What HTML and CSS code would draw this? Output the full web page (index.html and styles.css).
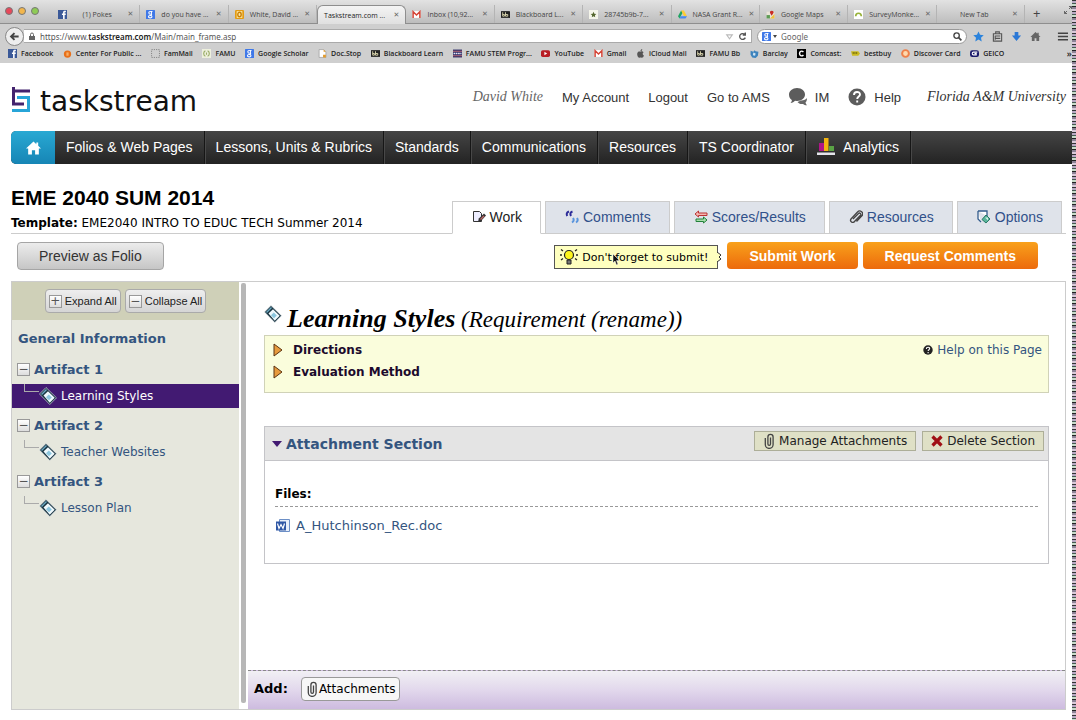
FILE: index.html
```html
<!DOCTYPE html>
<html lang="en">
<head>
<meta charset="utf-8">
<title>Taskstream.com</title>
<link rel="stylesheet" href="styles.css">
</head>
<body>
<svg class="defs" aria-hidden="true">
  <symbol id="i-fb" viewBox="0 0 16 16"><path fill="#3b5998" d="M0 0h16v16H0z"/><path fill="#fff" d="M9 16V9H7V6h2V4.500C9 2.500 10 1.500 12 1.500h2V4h-1.500c-.5 0-.7.300-.7.800V6H14l-.4 3h-1.800v7z"/></symbol>
  <symbol id="i-g" viewBox="0 0 16 16"><rect width="16" height="16" rx="1" fill="#3f78e8"/><g fill="none" stroke="#fff" stroke-width="1.800"><circle cx="7.500" cy="5" r="2.500"/><path d="M9 2.500h2.500M9 7c2 1.500 1 2.500-1 2.700"/><ellipse cx="7.500" cy="11.800" rx="3.200" ry="2.200"/></g></symbol>
  <symbol id="i-outlook" viewBox="0 0 16 16"><rect width="16" height="16" rx="2" fill="#e39b12"/><rect x="3" y="2" width="10" height="12" fill="#fbe9a8"/><ellipse cx="8" cy="8" rx="3" ry="4" fill="none" stroke="#c97f06" stroke-width="2.500"/></symbol>
  <symbol id="i-gmail" viewBox="0 0 16 16"><path fill="#fff" d="M1 2h14v12H1z"/><path fill="none" stroke="#d54436" stroke-width="2.600" d="M2 14V3l6 6 6-6v11"/></symbol>
  <symbol id="i-bb" viewBox="0 0 16 16"><path fill="#222" d="M0 2h16v12H0z"/><path fill="none" stroke="#e7e2b8" stroke-width="1.500" d="M3 4v7h3V8H3M8 4v7h4V8H8"/></symbol>
  <symbol id="i-star" viewBox="0 0 16 16"><path fill="#f5f5ea" d="M0 0h16v16H0z"/><path fill="#56682f" d="m8 3 1.500 3.500L13 7l-2.500 2.500L11 13l-3-2-3 2 .5-3.500L3 7l3.500-.5z"/></symbol>
  <symbol id="i-drive" viewBox="0 0 16 16"><path fill="#1fa463" d="M5.500 1 0 11l2.700 4 5.500-10z"/><path fill="#fc3" d="M5.500 1h5L16 11h-5.300z"/><path fill="#4688f1" d="M5 11h11l-2.700 4H2.700z"/></symbol>
  <symbol id="i-map" viewBox="0 0 16 16"><path fill="#e9e4d8" d="M1 3h14v12H1z"/><path fill="#5d9b55" d="M1 9h6v6H1z"/><path fill="#f0c33c" d="M7 15 15 7v8z"/><path fill="#c92c25" d="M10 10 7 5a3.300 3.300 0 1 1 6.500 0z"/></symbol>
  <symbol id="i-sm" viewBox="0 0 16 16"><path fill="#fff" d="M0 0h16v16H0z"/><path fill="none" stroke="#98b33a" stroke-width="3" d="M3 11c0-7 10-7 10 0"/></symbol>
  <symbol id="i-orange" viewBox="0 0 16 16"><circle cx="8" cy="9" r="6.500" fill="#e8701a"/><path fill="#f8b067" d="M6 6h4v6H6z"/></symbol>
  <symbol id="i-dash" viewBox="0 0 16 16"><path fill="none" stroke="#777" stroke-width="1.500" stroke-dasharray="2 2" d="M1 1h14v14H1z"/></symbol>
  <symbol id="i-code" viewBox="0 0 16 16"><path fill="#eef0dd" d="M0 0h16v16H0z"/><path fill="none" stroke="#9aac67" stroke-width="2" d="M6 3C2 5 2 11 6 13M10 3c4 2 4 8 0 10M8 6v4"/></symbol>
  <symbol id="i-doc" viewBox="0 0 16 16"><path fill="#fff" stroke="#888" d="M2 1h8l4 4v10H2z"/><path fill="#e29a2a" d="M10 1v4h4zM9 10h5v5H9z"/></symbol>
  <symbol id="i-stem" viewBox="0 0 16 16"><path fill="#2b2b66" d="M0 1h16v14H0z"/><path stroke="#d97979" stroke-width="1.500" d="M0 4h16M0 12h16"/><path stroke="#e6e6f5" stroke-width="2.500" stroke-dasharray="3 1" d="M1 8h14"/></symbol>
  <symbol id="i-yt" viewBox="0 0 16 16"><rect y="2" width="16" height="12" rx="3" fill="#b81d24"/><path fill="#fff" d="m6 5 5 3-5 3z"/></symbol>
  <symbol id="i-apple" viewBox="0 0 16 16"><path fill="#555" d="M8 5c2-1.500 4-1 5.500.6-2.500 1.600-2 5 .7 6C13 14.500 11.500 16 10 15.500c-1.300-.6-2-.6-3.400 0C4 16.500 1 10.500 2.500 7 3.700 4.300 6 4 8 5zM8 4c0-2.500 1.300-3.700 3-4 .2 2-1 4-3 4z"/></symbol>
  <symbol id="i-barclay" viewBox="0 0 16 16"><path fill="#3c83bd" d="M1 3l5 2 2-3 2 2 5 1-1 7-4 4-6-1-3-5z"/><path fill="#cfe4f2" d="m6 6 4 2-1 4-4-1z"/></symbol>
  <symbol id="i-c" viewBox="0 0 16 16"><path d="M0 0h16v16H0z"/><path fill="none" stroke="#fff" stroke-width="2.500" d="M11.500 5.500C8 2 4.500 4.500 4.500 8s3.500 6 7 2.500"/></symbol>
  <symbol id="i-bestbuy" viewBox="0 0 16 16"><path fill="#caba21" d="M0 4h13l3 4-3 4H2z"/><path stroke="#3e3900" stroke-width="2" stroke-dasharray="2 1" d="M3 7h9"/></symbol>
  <symbol id="i-disc" viewBox="0 0 16 16"><circle cx="8" cy="8" r="6" fill="#ffd9ad" stroke="#ee8049" stroke-width="3.500"/></symbol>
  <symbol id="i-geico" viewBox="0 0 16 16"><rect y="2" width="16" height="12" rx="4" fill="#1c1b6b"/><path fill="none" stroke="#fff" stroke-width="2" d="M13 5.500H6q-2 0-2 2.500t2 2.500h5V8H8"/></symbol>
  <symbol id="i-book" viewBox="0 0 18 18"><path fill="#17323f" stroke="#f4f8fa" stroke-width=".6" d="M.5 7 7 .5l10.500 10.300-6.700 6.700z"/><path fill="#6ba6c0" d="M2 7 7 2l1 1-5 5z"/><path fill="#eef8fc" d="M4.500 8.500 9 4.200l6.700 6.600-4.900 4.900z"/><path fill="#8cc7df" d="m9.800 7.500 3 3-2.800 2.800-3-3z"/></symbol>
  <symbol id="i-clip" viewBox="0 0 12 16"><path fill="none" stroke="#444" stroke-width="1.300" d="M7.500 4.500V11a1.300 1.300 0 0 1-2.600 0V4a2.600 2.600 0 0 1 5.200 0v7.500a3.900 3.900 0 0 1-7.800 0V5"/></symbol>
</svg>

<div class="screen">
<div class="app">
  <header class="chrome">
    <div class="tabstrip">
      <div class="lights"><i class="light red"></i><i class="light amber"></i><i class="light green"></i></div>
      <div class="tabs">
        <div class="tab"><svg class="fav"><use href="#i-fb"/></svg><span class="tab-name centered">(1) Pokes</span><button class="x" aria-label="Close">✕</button></div>
        <div class="tab"><svg class="fav"><use href="#i-g"/></svg><span class="tab-name">do you have ...</span><button class="x" aria-label="Close">✕</button></div>
        <div class="tab"><svg class="fav"><use href="#i-outlook"/></svg><span class="tab-name">White, David ...</span><button class="x" aria-label="Close">✕</button></div>
        <div class="tab active"><span class="tab-name">Taskstream.com ...</span><button class="x" aria-label="Close">✕</button></div>
        <div class="tab"><svg class="fav"><use href="#i-gmail"/></svg><span class="tab-name">Inbox (10,92...</span><button class="x" aria-label="Close">✕</button></div>
        <div class="tab"><svg class="fav"><use href="#i-bb"/></svg><span class="tab-name">Blackboard L...</span><button class="x" aria-label="Close">✕</button></div>
        <div class="tab"><svg class="fav"><use href="#i-star"/></svg><span class="tab-name">28745b9b-7...</span><button class="x" aria-label="Close">✕</button></div>
        <div class="tab"><svg class="fav"><use href="#i-drive"/></svg><span class="tab-name">NASA Grant R...</span><button class="x" aria-label="Close">✕</button></div>
        <div class="tab"><svg class="fav"><use href="#i-map"/></svg><span class="tab-name">Google Maps</span><button class="x" aria-label="Close">✕</button></div>
        <div class="tab"><svg class="fav"><use href="#i-sm"/></svg><span class="tab-name">SurveyMonke...</span><button class="x" aria-label="Close">✕</button></div>
        <div class="tab"><span class="tab-name centered">New Tab</span><button class="x" aria-label="Close">✕</button></div>
      </div>
      <div class="strip-end">
        <button class="plus" aria-label="New tab">+</button>
        <svg class="full" viewBox="0 0 8 8"><path d="M5 3 7.500.5M5 .5h2.500V3M3 5 .5 7.500M.5 5v2.500H3" fill="none" stroke="#666"/></svg>
      </div>
    </div>
    <div class="navrow">
      <button class="back" aria-label="Back"><svg viewBox="0 0 16 16"><path d="M14 8H4M8 3 3 8l5 5" fill="none" stroke="#444" stroke-width="2.800"/></svg></button>
      <div class="url">
        <svg class="lock" viewBox="0 0 8 8"><path fill="#666" d="M1 4h6v4H1z"/><path fill="none" stroke="#666" d="M2.500 4V2.500a1.500 1.500 0 0 1 3 0V4"/></svg>
        <div class="address" role="textbox" contenteditable="true" aria-label="Address">https://www.<b>taskstream.com</b>/Main/main_frame.asp</div>
        <svg class="fav" viewBox="0 0 8 8"><path fill="none" stroke="#bbb" d="M1.500 2.500h5L4 6z"/></svg>
        <svg class="fav" viewBox="0 0 8 8"><path fill="none" stroke="#555" stroke-width="1.200" d="M6 2.200A2.600 2.600 0 1 0 6.500 5M6.500.5v2.300H4.200"/></svg>
      </div>
      <label class="search">
        <svg class="fav"><use href="#i-g"/></svg>
        <span class="caret"></span>
        <input type="text" placeholder="Google" aria-label="Search">
        <svg class="fav" viewBox="0 0 8 8"><circle cx="3.200" cy="3.200" r="2.400" fill="none" stroke="#444" stroke-width="1.200"/><path d="m5 5 2.500 2.500" stroke="#444" stroke-width="1.500"/></svg>
      </label>
      <div class="tools">
        <svg viewBox="0 0 12 12"><path fill="#2b83dc" d="m6 .5 1.700 3.700 4 .5-3 2.700.8 4L6 9.400l-3.500 2 .8-4-3-2.700 4-.5z"/></svg>
        <svg viewBox="0 0 12 12"><path fill="none" stroke="#555" stroke-width="1.200" d="M1.500 3h9v8h-9zM4 3V1h4v2M3 5.500h6M3 8h6M3.500 5.500v4"/></svg>
        <svg viewBox="0 0 12 12"><path fill="#2b78d6" d="M4 1h4v4h3l-5 6-5-6h3z"/></svg>
        <svg viewBox="0 0 12 12"><path fill="#666" d="M6 1 .5 6.500H2V11h3V8h2v3h3V6.500h1.500L9.500 4.500V2H8v1z"/></svg>
        <svg class="menu" viewBox="0 0 12 12"><path stroke="#444" stroke-width="1.500" d="M1 2.500h11M1 6h11M1 9.500h11"/></svg>
      </div>
    </div>
    <nav class="bookmarks">
      <a href="#"><svg class="fav"><use href="#i-fb"/></svg>Facebook</a>
      <a href="#"><svg class="fav"><use href="#i-orange"/></svg>Center For Public ...</a>
      <a href="#"><svg class="fav"><use href="#i-dash"/></svg>FamMail</a>
      <a href="#"><svg class="fav"><use href="#i-code"/></svg>FAMU</a>
      <a href="#"><svg class="fav"><use href="#i-g"/></svg>Google Scholar</a>
      <a href="#"><svg class="fav"><use href="#i-doc"/></svg>Doc.Stop</a>
      <a href="#"><svg class="fav"><use href="#i-bb"/></svg>Blackboard Learn</a>
      <a href="#"><svg class="fav"><use href="#i-stem"/></svg>FAMU STEM Progr...</a>
      <a href="#"><svg class="fav"><use href="#i-yt"/></svg>YouTube</a>
      <a href="#"><svg class="fav"><use href="#i-gmail"/></svg>Gmail</a>
      <a href="#"><svg class="fav"><use href="#i-apple"/></svg>iCloud Mail</a>
      <a href="#"><svg class="fav"><use href="#i-bb"/></svg>FAMU Bb</a>
      <a href="#"><svg class="fav"><use href="#i-barclay"/></svg>Barclay</a>
      <a href="#"><svg class="fav"><use href="#i-c"/></svg>Comcast:</a>
      <a href="#"><svg class="fav"><use href="#i-bestbuy"/></svg>bestbuy</a>
      <a href="#"><svg class="fav"><use href="#i-disc"/></svg>Discover Card</a>
      <a href="#"><svg class="fav"><use href="#i-geico"/></svg>GEICO</a>
      <button class="more" aria-label="More bookmarks">»</button>
    </nav>
  </header>

  <div class="page">
    <div class="masthead">
      <a class="logo" href="#">
        <svg viewBox="0 0 20 26"><path fill="none" stroke="#27a5d8" stroke-width="3" d="M6 10.500h11.500v13H1"/><path fill="none" stroke="#43236e" stroke-width="3" d="M19 4H2M2.500 0v17H13"/></svg>
        <span>taskstream</span>
      </a>
      <nav class="account">
        <em class="who">David White</em>
        <a href="#">My Account</a>
        <a href="#">Logout</a>
        <a href="#">Go to AMS</a>
        <a href="#"><svg class="im" viewBox="0 0 18 18"><path fill="#666" d="M12 12.500c3 0 5-1 6-2.500 0 3-1 4-1.500 4.500.2 1.200.7 2 1.500 2.800-2 0-3-.5-4-1.300-2.500.3-4.500-.5-5.500-2z"/><path fill="#5c5c5c" d="M8 0c5 0 8 3 8 6.500S13 13 8 13l-2-.2C5 14 3.500 14.800 1.500 15c1-1 1.500-2 1.300-3C1 10.800 0 9 0 6.500 0 3 3.500 0 8 0z"/></svg>IM</a>
        <a href="#"><svg class="im" viewBox="0 0 18 18"><circle cx="9" cy="9" r="8.500" fill="#5c5c5c"/><path d="M6 7c0-4 6-4 6-.5C12 8.500 9.200 8.500 9.200 11M9.200 12.500v2" fill="none" stroke="#fff" stroke-width="1.900"/></svg>Help</a>
        <em class="school">Florida A&amp;M University</em>
      </nav>
    </div>

    <nav class="mainnav">
      <a class="home" href="#" aria-label="Home"><svg viewBox="0 0 16 14"><path fill="#fff" d="M8 0 0 7.500h2.300V14h4V9.500h3.400V14h4V7.500H16L13 4.700V1h-2v2z"/></svg></a>
      <a href="#">Folios &amp; Web Pages</a>
      <a href="#">Lessons, Units &amp; Rubrics</a>
      <a href="#">Standards</a>
      <a href="#">Communications</a>
      <a href="#">Resources</a>
      <a href="#">TS Coordinator</a>
      <a href="#"><svg class="chart" viewBox="0 0 18 17"><path fill="#b01687" d="M2 5h5v8H2z"/><path fill="#f2b510" d="M7 0h4.500v13H7z"/><path fill="#5aa345" d="M12 8h5v5h-5z"/><path fill="#e4e4ea" d="M0 14.500h18V17H0z"/></svg>Analytics</a>
    </nav>

    <div class="heading">
      <div class="titles">
        <h1>EME 2040 SUM 2014</h1>
        <p><b>Template:</b> EME2040 INTRO TO EDUC TECH Summer 2014</p>
      </div>
      <nav class="worktabs">
        <a class="current" href="#"><svg viewBox="0 0 14 14"><path fill="#eef" stroke="#333" d="M1.500 1.500h6l2 2v8h-8z"/><path fill="#333" d="m6 12 .8-3.500L12 3.500l2 2-5.200 5.700z"/><path fill="#b66" d="m8 9 3.500-3.500 1 1L9 10z"/></svg>Work</a>
        <a href="#"><svg viewBox="0 0 14 14"><g fill="none" stroke-width="2"><path stroke="#2c2c99" d="M4 1.500C1.500 2.500 1.300 4 2.200 6M7.500 1.500C5 2.500 5 4 6 6"/><path stroke="#5a95dd" d="M8 8c1.300 2 .5 3.500-1 4.500M12 8c1.300 2 .5 3.500-1 4.500"/></g></svg>Comments</a>
        <a href="#"><svg viewBox="0 0 14 14"><path fill="#f4b7b2" stroke="#b33" d="M1 4 4.500 1v2H13v2.500H4.500V7z"/><path fill="#a8dfac" stroke="#22803a" d="M13 10 9.500 7v2H2v2.500h7.500V13z"/></svg>Scores/Results</a>
        <a href="#"><svg viewBox="0 0 14 14"><path fill="none" stroke="#444" stroke-width="1.300" d="m4 9 5.500-5.500a1.200 1.200 0 0 1 2 1.800L5.500 11.500A2 2 0 0 1 2 9l6.500-7a2.800 2.800 0 0 1 4.400 3.800L7.500 11.500"/></svg>Resources</a>
        <a href="#"><svg viewBox="0 0 14 14"><path fill="#fff" stroke="#345d8d" stroke-width="1.300" d="M1 1h9v5M1 1v8l3 3"/><path fill="#59b59a" stroke="#2a7867" d="m9 5 4 4-4 4-4-3.500z"/><path fill="#d6f1e7" d="M8 7.500h3v3z"/></svg>Options</a>
      </nav>
    </div>

    <div class="actions">
      <button class="preview">Preview as Folio</button>
      <div class="submit-row">
        <div class="hint">
          <svg class="bulb" viewBox="0 0 18 18"><circle cx="9" cy="7" r="4.500" fill="#fdf51c" stroke="#222" stroke-width="1.200"/><path fill="#777" stroke="#222" d="M7 12h4v4H7z"/><path stroke="#222" stroke-width="1.300" d="M1 1.500 3 3M0 7h2M1 12l2-1.500M17 1.500 15 3M18 7h-2M17 12l-2-1.500"/></svg>
          <span>Don't forget to submit!</span>
          <svg class="notch" viewBox="0 0 6 10"><path fill="#feffbf" d="M0 0h1l4 3-2 2 2 2-4 3H0z"/><path fill="none" stroke="#333" d="m1 0 4 3-2 2 2 2-4 3"/></svg>
          <svg class="pointer" viewBox="0 0 8 12"><path fill="#111" stroke="#fff" stroke-width=".5" d="M1 0v9l2-2 1.500 4 1.500-.7L4.500 6.500h3z"/></svg>
        </div>
        <button class="go">Submit Work</button>
        <button class="go">Request Comments</button>
      </div>
    </div>

    <div class="workspace">
      <aside class="sidebar">
        <div class="side-tools">
          <button><span class="box">+</span>Expand All</button>
          <button><span class="box">−</span>Collapse All</button>
        </div>
        <a class="general" href="#">General Information</a>
        <div class="group"><span class="box">−</span><a href="#">Artifact 1</a></div>
        <a class="leaf selected" href="#"><i class="elbow"></i><svg class="book"><use href="#i-book"/></svg>Learning Styles</a>
        <div class="group"><span class="box">−</span><a href="#">Artifact 2</a></div>
        <a class="leaf" href="#"><i class="elbow"></i><svg class="book"><use href="#i-book"/></svg>Teacher Websites</a>
        <div class="group"><span class="box">−</span><a href="#">Artifact 3</a></div>
        <a class="leaf" href="#"><i class="elbow"></i><svg class="book"><use href="#i-book"/></svg>Lesson Plan</a>
      </aside>
      <div class="divider"></div>
      <main class="content">
        <div class="body">
          <h2><svg class="book"><use href="#i-book"/></svg><span><strong>Learning Styles</strong> (Requirement (rename))</span></h2>
          <section class="info">
            <div class="info-links">
              <a href="#"><svg viewBox="0 0 10 14"><path fill="#e79a3c" stroke="#5b3312" d="m1 1 8 6-8 6z"/></svg>Directions</a>
              <a href="#"><svg viewBox="0 0 10 14"><path fill="#e79a3c" stroke="#5b3312" d="m1 1 8 6-8 6z"/></svg>Evaluation Method</a>
            </div>
            <a class="helplink" href="#"><svg viewBox="0 0 18 18"><circle cx="9" cy="9" r="8.500" fill="#222"/><path d="M6 7c0-4 6-4 6-.5C12 8.500 9.200 8.500 9.200 11M9.200 12.500v2.500" fill="none" stroke="#fff" stroke-width="2"/></svg>Help on this Page</a>
          </section>
          <section class="attach">
            <header>
              <h3><span class="down"></span>Attachment Section</h3>
              <div class="attach-tools">
                <button><svg class="clip"><use href="#i-clip"/></svg>Manage Attachments</button>
                <button><svg class="del" viewBox="0 0 12 12"><path stroke="#a01016" stroke-width="3.200" d="m1.500 1.500 9 9M10.500 1.500l-9 9"/></svg>Delete Section</button>
              </div>
            </header>
            <div class="files">
              <h4>Files:</h4>
              <a href="#"><svg viewBox="0 0 14 14"><path fill="#e8effa" stroke="#6c8fc6" d="M3.500.5h10v12h-10z"/><path fill="#2f57a5" d="M0 2.500h10v9H0z"/><path fill="none" stroke="#fff" stroke-width="1.200" d="m1.500 4.500 1.500 5 2-4 2 4 1.500-5"/></svg>A_Hutchinson_Rec.doc</a>
            </div>
          </section>
        </div>
        <footer class="addbar">
          <b>Add:</b>
          <button><svg class="clip"><use href="#i-clip"/></svg>Attachments</button>
        </footer>
      </main>
    </div>
  </div>
</div>
<div class="edge"></div>
</div>
</body>
</html>
```
FILE: styles.css
```css
* { box-sizing: border-box; }
body { margin: 0; background: #fff; color: #000; font-family: "DejaVu Sans", Verdana, sans-serif; font-size: 12px; }
a { color: inherit; text-decoration: none; }
button { font: inherit; color: inherit; padding: 0; border: 0; background: none; }
h1, h2, h3, h4, p { margin: 0; }
svg { flex: none; display: block; }
.defs { position: absolute; width: 0; height: 0; }

.screen { display: flex; min-height: 100vh; }
.app { flex: 1; min-width: 0; display: flex; flex-direction: column; }
.edge { flex: 0 0 4px; background: repeating-linear-gradient(#333 0 1px, #b9a9c4 1px 3px, #465a50 3px 4px, #c9dccb 4px 6px, #222 6px 7px, #8d8396 7px 9px, #d9c9d9 9px 11px); }

/* browser window */
.chrome { font: 7px "Open Sans", sans-serif; color: #222; background: #cfcfcf; height: 63px; display: flex; flex-direction: column; }
.fav { width: 9px; height: 9px; }
.tabstrip { display: flex; height: 24px; background: linear-gradient(#e2e2e2, #bdbdbd); border-bottom: 1px solid #8e8e8e; }
.lights { flex: 0 0 52px; display: flex; gap: 5px; padding: 7px 5px 0; }
.light { width: 8px; height: 8px; border-radius: 50%; border: 1px solid #777; }
.red { background: #e8485a; }
.amber { background: #f2b64c; }
.green { background: #8ecb55; }
.tabs { flex: 1; display: flex; padding-top: 5px; }
.tab { flex: 1 1 0; min-width: 0; display: flex; align-items: center; gap: 6px; padding: 0 6px; color: #444; border-right: 1px solid #b4b4b4; white-space: nowrap; }
.tab-name { flex: 1; }
.centered { text-align: center; }
.x { font-family: "DejaVu Sans", sans-serif; font-size: 7px; color: #666; }
.active { background: linear-gradient(#f4f4f4, #e0e0e0); color: #222; border: 1px solid #8e8e8e; border-bottom: 0; border-radius: 6px 6px 0 0; margin-bottom: -1px; }
.strip-end { flex: 0 0 47px; display: flex; align-items: center; justify-content: space-between; padding: 3px 0 0 8px; }
.plus { font-size: 13px; line-height: 13px; color: #444; }
.full { width: 8px; height: 8px; margin-bottom: 6px; }
.navrow { display: flex; align-items: center; height: 20px; margin-top: 2px; padding: 0 4px 0 5px; }
.back { width: 19px; height: 19px; border-radius: 50%; border: 1px solid #888; background: #eee; display: grid; place-items: center; z-index: 1; }
.back svg { width: 11px; height: 11px; }
.url { flex: 1; display: flex; align-items: center; gap: 4px; height: 14px; padding: 0 4px; background: #fff; border: 1px solid #aaa; border-left: 0; }
.lock { width: 8px; height: 8px; }
.address { flex: 1; white-space: nowrap; color: #555; font: 8px "Noto Sans", sans-serif; }
.address b { font-weight: 600; color: #222; }
.search { flex: 0 0 210px; display: flex; align-items: center; gap: 2px; height: 15px; margin-left: 5px; padding: 0 4px; border: 1px solid #999; border-radius: 8px; background: #fff; }
.search input { flex: 1; min-width: 0; padding: 0 2px; border: 0; outline: 0; background: none; font: 8px "Noto Sans", sans-serif; }
.search input::placeholder { color: #666; }
.caret { border: 2px solid transparent; border-top: 3px solid #444; border-bottom: 0; }
.tools { display: flex; gap: 8px; padding-left: 6px; }
.tools svg { width: 11px; height: 11px; }
.tools .menu { margin-left: 8px; }
.bookmarks { flex: 1; display: flex; align-items: center; justify-content: space-between; padding: 0 0 2px 8px; font-weight: 600; white-space: nowrap; }
.bookmarks a { display: flex; align-items: center; gap: 4px; }
.more { font-size: 9px; padding-left: 53px; }

/* masthead */
.page { flex: 1; display: flex; flex-direction: column; padding: 17px 0 10px 11px; }
.masthead { display: flex; justify-content: space-between; height: 51px; padding-right: 6px; }
.logo { display: flex; gap: 9px; font: 28px/44px "DejaVu Sans", sans-serif; color: #111; }
.logo svg { width: 20px; height: 26px; margin-top: 7px; }
.account { display: flex; align-items: center; gap: 19px; height: 34px; font: 13px "Liberation Sans", Arial, sans-serif; color: #333; white-space: nowrap; }
.account a { display: flex; align-items: center; gap: 8px; }
.account em { font: italic 14px "Liberation Serif", Georgia, serif; }
.who { color: #666; }
.school { margin-left: 7px; }
.im { width: 18px; height: 18px; }
.mainnav { display: flex; height: 33px; border-radius: 5px 0 0 5px; overflow: hidden; background: linear-gradient(#454545, #232323); font: 14px "Liberation Sans", Arial, sans-serif; color: #fff; white-space: nowrap; }
.mainnav a { display: flex; align-items: center; gap: 8px; padding: 0 11px 2px; border-right: 1px solid #161616; box-shadow: 1px 0 #484848; }
.mainnav .home { padding: 0; width: 44px; justify-content: center; border: 0; box-shadow: none; background: linear-gradient(#29a9d3, #1685b5); }
.home svg { width: 15px; height: 14px; }
.chart { width: 18px; height: 17px; }

/* page heading */
.heading { display: flex; justify-content: space-between; height: 70px; margin-right: 6px; border-bottom: 1px solid #ccc; }
.titles h1 { margin-top: 22px; font: bold 21px/24px "Liberation Sans", Arial, sans-serif; }
.titles p { margin-top: 5px; line-height: 16px; }
.worktabs { display: flex; gap: 4px; margin: 37px 4px -1px 0; font: 14px "Liberation Sans", Arial, sans-serif; color: #31518a; white-space: nowrap; }
.worktabs a { display: flex; align-items: center; gap: 4px; padding: 0 18px 1px 19px; background: #dfe3ea; border: 1px solid #ccc; }
.worktabs .current { background: #fff; border-bottom-color: #fff; color: #222; }
.worktabs svg { width: 14px; height: 14px; }
.actions { display: flex; justify-content: space-between; height: 47px; padding: 8px 34px 0 6px; font: 14px "Liberation Sans", Arial, sans-serif; }
.preview { height: 28px; padding: 0 21px; border: 1px solid #a5a5a5; border-radius: 4px; background: linear-gradient(#ececec, #c6c6c6); color: #333; }
.submit-row { display: flex; gap: 5px; white-space: nowrap; }
.hint { position: relative; display: flex; align-items: center; gap: 4px; height: 24px; margin: 3px 4px 0 0; padding: 0 9px 0 5px; border: 1px solid #555; background: #feffbf; font: 11px "DejaVu Sans", sans-serif; }
.bulb { width: 18px; height: 18px; }
.notch { position: absolute; right: -5px; top: 6px; width: 6px; height: 10px; }
.pointer { position: absolute; left: 57px; top: 8px; width: 8px; height: 12px; }
.go { height: 27px; padding: 0 22px; border-radius: 4px; background: linear-gradient(#f9a11b, #ec6a0c); color: #fff; font-weight: bold; }

/* workspace */
.workspace { flex: 1; display: flex; margin-right: 6px; border: 1px solid #ccc; }
.sidebar { flex: 0 0 227px; display: flex; flex-direction: column; background: #e6e7dd; color: #34557f; font-size: 13px; }
.side-tools { display: flex; justify-content: center; gap: 4px; height: 38px; padding: 7px 0; background: #cfd0b8; }
.side-tools button { display: flex; align-items: center; gap: 3px; padding: 0 3px; border: 1px solid #aaa; border-radius: 4px; background: linear-gradient(#eee, #d5d5d5); color: #222; font: 11px/18px "Liberation Sans", Arial, sans-serif; }
.box { display: grid; place-items: center; width: 13px; height: 13px; border: 1px solid #999; background: linear-gradient(#fff, #ddd); color: #555; font: 12px/11px "DejaVu Sans", sans-serif; }
.general { padding: 10px 6px 0; font-weight: bold; line-height: 18px; }
.group { display: flex; align-items: center; gap: 4px; padding: 2px 5px 0; height: 32px; font-weight: bold; }
.general + .group { margin-top: 4px; }
.leaf { display: flex; align-items: center; height: 24px; padding-left: 12px; font-size: 12px; }
.selected { background: #421a72; color: #fff; }
.elbow { width: 15px; height: 8px; margin-bottom: 16px; border: solid #aaa; border-width: 0 0 1px 1px; }
.book { width: 18px; height: 18px; }
.leaf .book { margin-right: 4px; }
.divider { flex: 0 0 5px; margin: 1px 2px 6px; border-radius: 2px; background: #b7b7b7; }
.content { flex: 1; min-width: 0; display: flex; flex-direction: column; }
.body { flex: 1; padding: 21px 16px 0; }
h2 { display: flex; gap: 5px; font: italic 23px/31px "Liberation Serif", Georgia, serif; }
h2 strong { font-size: 26px; }
h2 .book { margin-top: 2px; }
.info { display: flex; justify-content: space-between; height: 58px; padding: 3px 6px 0 8px; border: 1px solid #d0d2b8; background: #fafddc; }
.info-links { font-weight: bold; color: #1c0a2c; }
.info-links a { display: flex; align-items: center; gap: 10px; height: 22px; }
.info-links svg { width: 10px; height: 14px; }
.helplink { display: flex; align-items: center; gap: 4px; height: 22px; color: #34557f; }
.helplink svg { width: 10px; height: 10px; }
.attach { margin-top: 33px; border: 1px solid #c4c4c8; }
.attach header { display: flex; justify-content: space-between; height: 34px; padding: 4px 4px 0 7px; background: #e4e4e4; border-bottom: 1px solid #c4c4c8; }
h3 { display: flex; align-items: center; gap: 4px; height: 26px; font-size: 14px; color: #34557f; }
.down { border: 5px solid transparent; border-top: 6px solid #421a72; border-bottom: 0; }
.attach-tools { display: flex; gap: 6px; }
.attach-tools button { display: flex; align-items: center; gap: 4px; height: 20px; padding: 0 8px; border: 1px solid #adae98; background: #dfe0c6; color: #222; }
.clip { width: 12px; height: 16px; }
.del { width: 12px; height: 12px; }
.files { padding: 24px 10px 0; height: 102px; }
h4 { font-size: 12px; line-height: 18px; padding-bottom: 3px; border-bottom: 1px dashed #999; }
.files a { display: flex; align-items: center; gap: 6px; margin: 10px 0 0 1px; font-size: 13px; line-height: 18px; color: #34557f; }
.files svg { width: 14px; height: 14px; }
.addbar { display: flex; align-items: center; gap: 13px; height: 39px; padding: 0 6px 3px; border-top: 1px dashed #888; background: linear-gradient(#f1f0f4, #e2d8ec 50%, #cdbbdf); font-size: 13px; }
.addbar button { display: flex; align-items: center; gap: 1px; height: 24px; padding: 0 4px; border: 1px solid #999; border-radius: 4px; background: #f7f7f7; font-size: 12px; }
```
